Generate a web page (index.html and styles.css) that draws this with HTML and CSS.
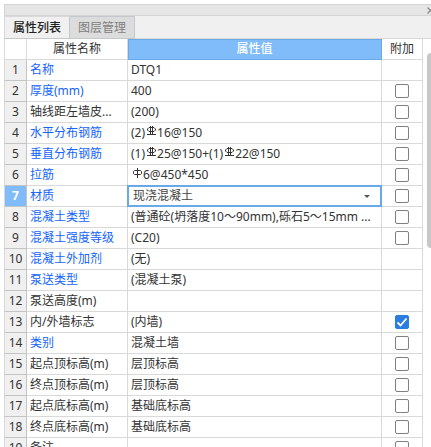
FILE: index.html
```
<!doctype html>
<html lang="zh-CN">
<head>
  <meta charset="utf-8"/>
  <title>属性列表</title>
  <link rel="stylesheet" href="styles.css">
</head>
<body>
<svg class="defs" xmlns="http://www.w3.org/2000/svg">
  <!-- rebar grade symbols -->
  <symbol id="rebar-c" viewBox="0 0 10 11">
    <path d="M3.5 0v9M5.5 0v9M0 8.5h9" fill="none" stroke="currentColor"/>
    <path d="M2 1.5h5L8.5 3v1L7 5.5H2L0.5 4V3z" fill="none" stroke="currentColor"/>
  </symbol>
  <symbol id="rebar-a" viewBox="0 0 10 11">
    <path d="M4.5 0v10" fill="none" stroke="currentColor"/>
    <path d="M1.5 2.5h6l1 1v2l-1 1h-6l-1-1v-2z" fill="none" stroke="currentColor"/>
  </symbol>
</svg>
<div class="panel">
  <div class="titlebar">
    <button class="close" type="button" aria-label="关闭">
      <svg width="7" height="7" viewBox="0 0 7 7"><path d="M0.5 0.5l6 6M6.5 0.5l-6 6" fill="none" stroke="currentColor" stroke-width="1.3"/></svg>
    </button>
  </div>
  <div class="tabs" role="tablist">
    <button class="tab active" type="button" role="tab" aria-selected="true">属性列表</button>
    <button class="tab" type="button" role="tab" aria-selected="false">图层管理</button>
  </div>
  <div class="content">
    <table class="props">
      <colgroup>
        <col class="col-no">
        <col class="col-name">
        <col>
        <col class="col-extra">
      </colgroup>
      <thead>
        <tr><th></th><th>属性名称</th><th class="current">属性值</th><th>附加</th></tr>
      </thead>
      <tbody>
        <tr><th>1</th><td class="key">名称</td><td>DTQ1</td><td></td></tr>
        <tr><th>2</th><td class="key">厚度(mm)</td><td>400</td><td class="check"><input type="checkbox" aria-label="厚度"></td></tr>
        <tr><th>3</th><td>轴线距左墙皮...</td><td>(200)</td><td class="check"><input type="checkbox" aria-label="轴线距左墙皮"></td></tr>
        <tr><th>4</th><td class="key">水平分布钢筋</td><td>(2)<svg class="rebar"><use href="#rebar-c"/></svg>16@150</td><td class="check"><input type="checkbox" aria-label="水平分布钢筋"></td></tr>
        <tr><th>5</th><td class="key">垂直分布钢筋</td><td>(1)<svg class="rebar"><use href="#rebar-c"/></svg>25@150+(1)<svg class="rebar"><use href="#rebar-c"/></svg>22@150</td><td class="check"><input type="checkbox" aria-label="垂直分布钢筋"></td></tr>
        <tr><th>6</th><td class="key">拉筋</td><td><svg class="rebar"><use href="#rebar-a"/></svg>6@450*450</td><td class="check"><input type="checkbox" aria-label="拉筋"></td></tr>
        <tr><th class="current">7</th><td class="key"><label for="material">材质</label></td><td class="edit"><div class="combo"><select id="material"><option>现浇混凝土</option></select></div></td><td class="check"><input type="checkbox" aria-label="材质"></td></tr>
        <tr><th>8</th><td class="key">混凝土类型</td><td>(普通砼(坍落度10～90mm),砾石5～15mm ...</td><td class="check"><input type="checkbox" aria-label="混凝土类型"></td></tr>
        <tr><th>9</th><td class="key">混凝土强度等级</td><td>(C20)</td><td class="check"><input type="checkbox" aria-label="混凝土强度等级"></td></tr>
        <tr><th>10</th><td class="key">混凝土外加剂</td><td>(无)</td><td></td></tr>
        <tr><th>11</th><td class="key">泵送类型</td><td>(混凝土泵)</td><td></td></tr>
        <tr><th>12</th><td>泵送高度(m)</td><td></td><td></td></tr>
        <tr><th>13</th><td>内/外墙标志</td><td>(内墙)</td><td class="check"><input type="checkbox" aria-label="内/外墙标志" checked></td></tr>
        <tr><th>14</th><td class="key">类别</td><td>混凝土墙</td><td class="check"><input type="checkbox" aria-label="类别"></td></tr>
        <tr><th>15</th><td>起点顶标高(m)</td><td>层顶标高</td><td class="check"><input type="checkbox" aria-label="起点顶标高"></td></tr>
        <tr><th>16</th><td>终点顶标高(m)</td><td>层顶标高</td><td class="check"><input type="checkbox" aria-label="终点顶标高"></td></tr>
        <tr><th>17</th><td>起点底标高(m)</td><td>基础底标高</td><td class="check"><input type="checkbox" aria-label="起点底标高"></td></tr>
        <tr><th>18</th><td>终点底标高(m)</td><td>基础底标高</td><td class="check"><input type="checkbox" aria-label="终点底标高"></td></tr>
        <tr><th>19</th><td>备注</td><td></td><td class="check"><input type="checkbox" aria-label="备注"></td></tr>
      </tbody>
    </table>
    <div class="scrollbar"><div class="thumb"></div></div>
  </div>
</div>
</body>
</html>
```

FILE: styles.css
```
* {
  box-sizing: border-box;
}
body {
  margin: 0;
  background: #fff;
  color: #333;
  font-family: "Noto Sans", "Noto Sans CJK SC", sans-serif;
  font-size: 12px;
  line-height: 18px;
}
button, select {
  font: inherit;
}
.defs {
  display: none;
}
.panel {
  display: flex;
  flex-direction: column;
  height: 100vh;
  padding: 4px 0 0 4px;
  overflow: hidden;
}
.titlebar {
  display: flex;
  flex: none;
  justify-content: flex-end;
  align-items: center;
  height: 12px;
  background: #e6e6e6;
  border: 1px solid #d5d5d5;
  border-right: 0;
}
.close {
  display: flex;
  flex: none;
  margin-right: -3px;
  padding: 0;
  border: 0;
  background: none;
  color: #8c8c8c;
}
.tabs {
  display: flex;
  flex: none;
  height: 23px;
  background: #f0f0f0;
  border-bottom: 1px solid #d9d9d9;
}
.tab {
  width: 65px;
  height: 23px;
  padding: 0;
  background: #dcdcdc;
  border: 1px solid #c4c7cd;
  border-left: 0;
  color: #808080;
  text-align: center;
}
.tab.active {
  width: 66px;
  background: #f0f0f0;
  border-left: 1px solid #d9d9d9;
  border-top-color: #d9d9d9;
  color: #222;
  font-weight: 500;
}
.content {
  display: flex;
  flex: 1;
  min-height: 0;
}
.props {
  flex: 1;
  align-self: flex-start;
  width: 100%;
  table-layout: fixed;
  border-collapse: separate;
  border-spacing: 0;
}
.col-no {
  width: 23px;
}
.col-name {
  width: 101px;
}
.col-extra {
  width: 41px;
}
.props th,
.props td {
  height: 21px;
  padding: 0 0 0 3px;
  border-right: 1px solid #d9d9d9;
  border-bottom: 1px solid #d9d9d9;
  font-weight: 400;
  line-height: 20px;
  text-align: left;
  white-space: nowrap;
  overflow: hidden;
}
.props thead th {
  padding: 0;
  text-align: center;
}
.props th:first-child {
  padding: 0;
  border-left: 1px solid #d9d9d9;
  text-align: center;
}
.props tbody th {
  background: #f0f0f0;
  border-right-color: #c4c4c4;
  border-bottom-color: #c4c4c4;
}
.props .key {
  color: #1464ff;
}
.props thead .current {
  background: #80bbfa;
  border-color: #6aa9e8;
  color: #fff;
  font-weight: 500;
  box-shadow: inset 1px 1px #6aa9e8;
}
.props tbody .current {
  background: #80bbfa;
  color: #fff;
  font-weight: 700;
}
.props .edit {
  padding: 0;
  overflow: visible;
}
.combo {
  position: relative;
}
.combo::after {
  content: "";
  position: absolute;
  top: 9px;
  right: 11px;
  border: 3px solid transparent;
  border-top-color: #4d5866;
  border-bottom: 0;
  pointer-events: none;
}
.combo select {
  display: block;
  appearance: none;
  width: 100%;
  height: 20px;
  padding: 0 20px 0 5px;
  border: 0;
  border-radius: 0;
  background: #fff;
  color: #444;
  outline: 2px solid #6aa9e8;
  outline-offset: -1px;
}
.props .check {
  padding: 0;
  text-align: center;
}
.check input {
  appearance: none;
  display: block;
  width: 14px;
  height: 14px;
  margin: 0 auto;
  background: #fff;
  border: 1px solid #808080;
  border-radius: 2px;
}
.check input:checked {
  background: #2a7de1 url("data:image/svg+xml,%3Csvg xmlns='http://www.w3.org/2000/svg' viewBox='0 0 12 12'%3E%3Cpath d='M1.5 6.5l3 3 6-7' fill='none' stroke='white' stroke-width='1.8'/%3E%3C/svg%3E") center / 12px no-repeat;
  border-color: #2a7de1;
}
.rebar {
  width: 10px;
  height: 11px;
  margin: 0 0 0 2px;
  vertical-align: 0;
}
.scrollbar {
  flex: none;
  width: 8px;
  padding: 14px 0 0 4px;
}
.thumb {
  height: 195px;
  background: #c8c8c8;
  border-radius: 4px 0 0 4px;
}
```
